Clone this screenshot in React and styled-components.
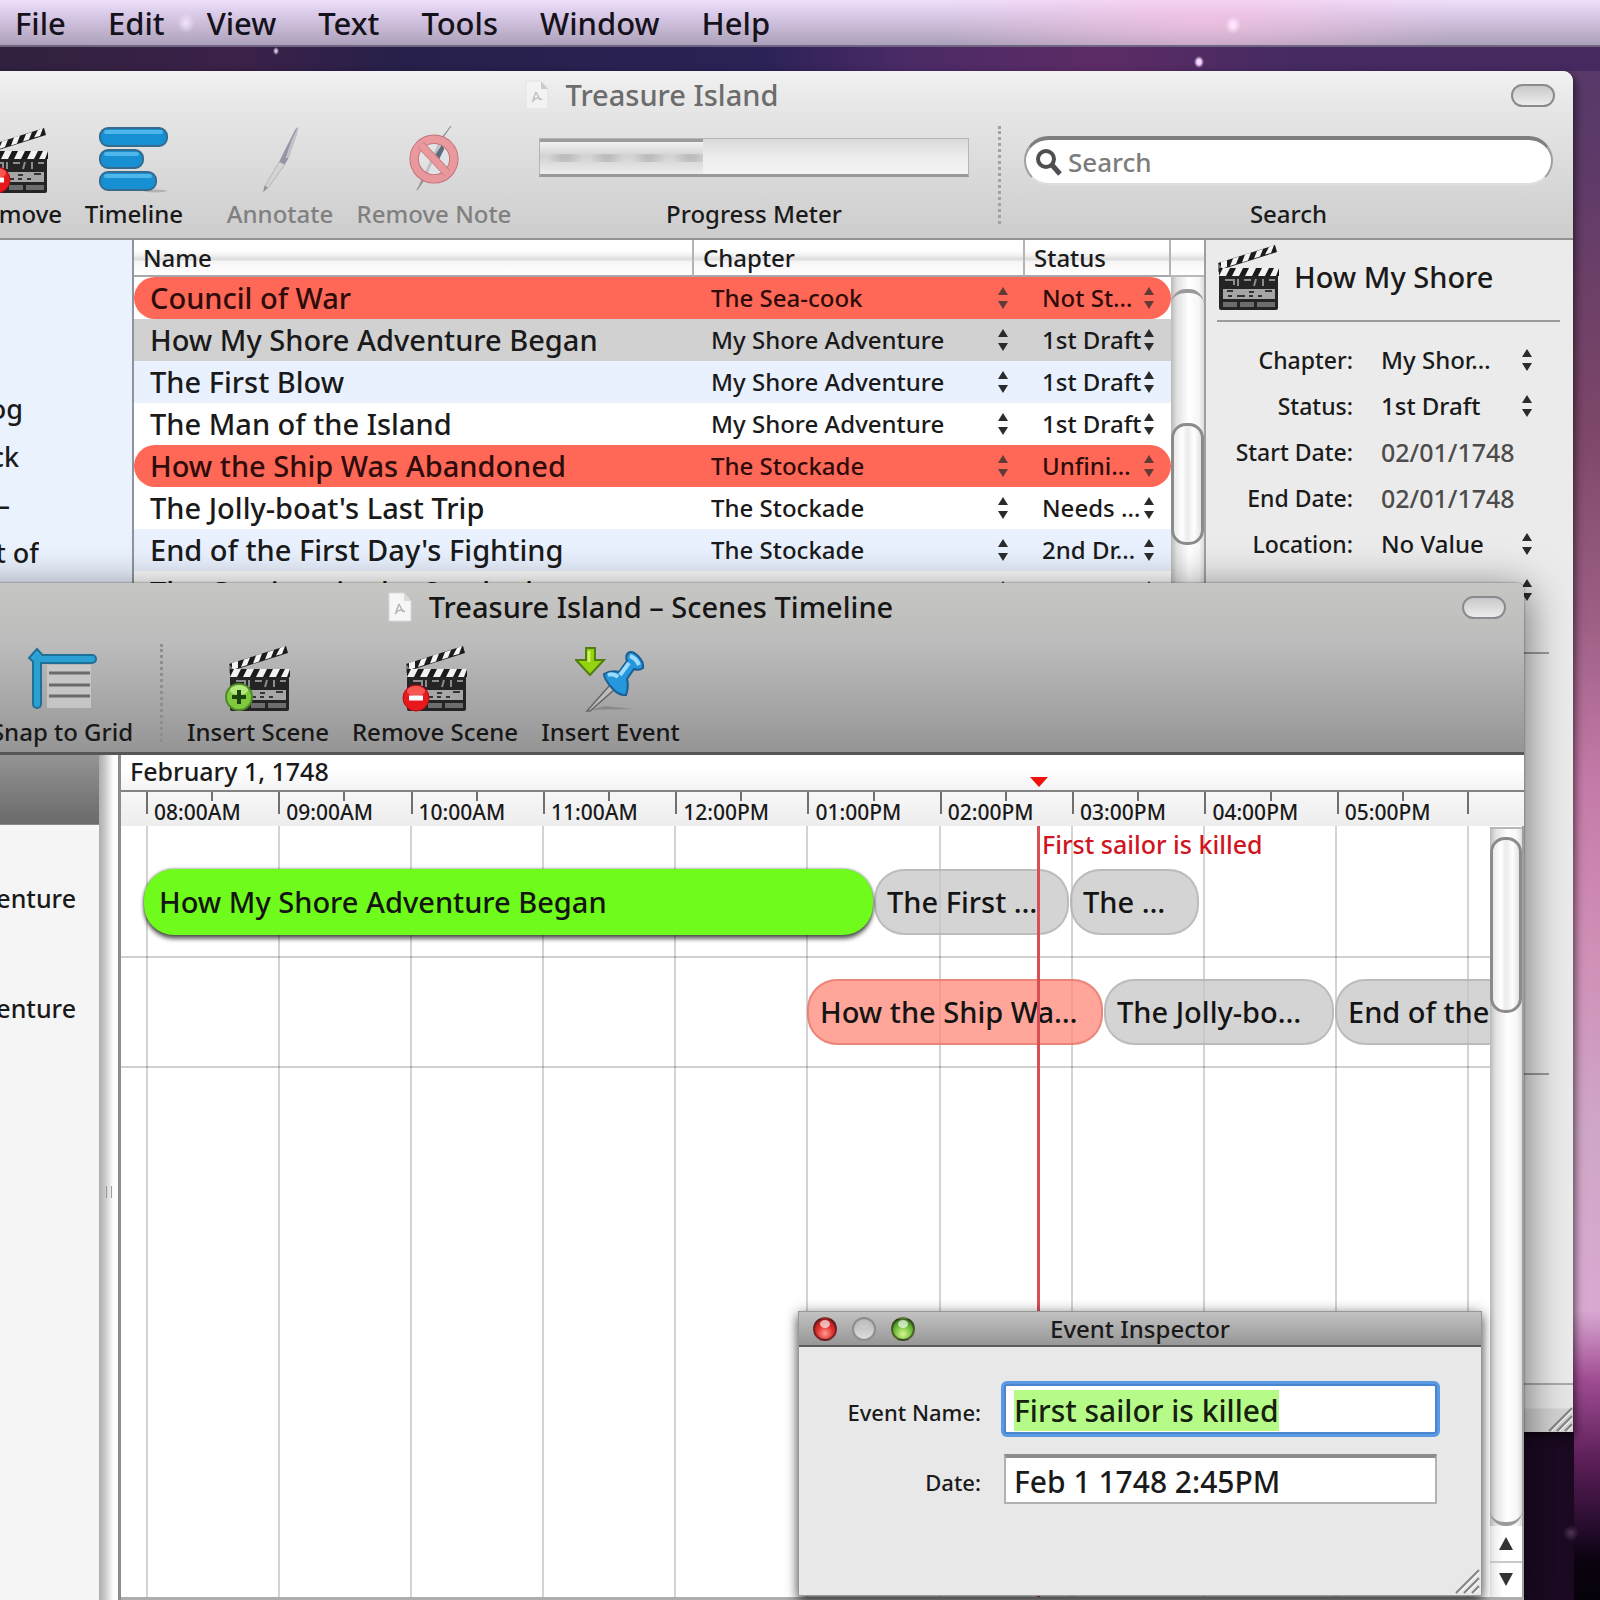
import React, { useEffect, useRef } from "react";
import styled, { createGlobalStyle, css } from "styled-components";

const FONT = '"Noto Sans", "Open Sans", sans-serif';

const GlobalStyle = createGlobalStyle`
  *, *::before, *::after { box-sizing: border-box; }
  body { margin: 0; font-family: ${FONT}; font-weight: 500; color: #1a1a1a; }
  button, input, select { font: inherit; color: inherit; margin: 0; }
  button, select { border: 0; padding: 0; background: none; appearance: none; }
`;

/* ---------- Desktop ---------- */

const Desktop = styled.main`
  position: relative;
  height: 100vh;
  min-height: 900px;
  overflow: hidden;
  background:
    radial-gradient(ellipse 5px 6px at 1199px 62px, #f3dcff 40%, transparent 100%),
    radial-gradient(ellipse 3px 4px at 276px 51px, #cfc3e0 30%, transparent 100%),
    radial-gradient(circle 8px at 1571px 1533px, #4a3350 10%, transparent 100%),
    linear-gradient(#1b0a22, #1b0a22) 1524px 1432px / 50px 200px no-repeat,
    linear-gradient(90deg, #30213f 0, #3b2148 240px, #27204a 400px, #2b2256 760px, #4a2a66 900px, #5d2c66 1100px, #452a62 1300px, #46295e 1600px) 0 0 / 100% 71px no-repeat,
    linear-gradient(#55386a 0, #5d3a68 160px, #7c4668 420px, #9d5f85 620px, #c47aa8 780px, #d08fb6 950px, #cfa6c6 1130px, #d9a9d2 1310px, #a04c92 1380px, #5c1f58 1460px, #240b2c 1530px, #0b030f 1560px, #06020a 1600px);
`;

const MenuBar = styled.nav`
  display: flex;
  align-items: center;
  gap: 42px;
  height: 47px;
  padding: 0 15px;
  background:
    radial-gradient(ellipse 8px 9px at 1233px 25px, #ffe6ff 20%, transparent 100%),
    radial-gradient(ellipse 9px 10px at 186px 23px, rgba(245, 232, 255, 0.8) 10%, transparent 100%),
    radial-gradient(ellipse 260px 60px at 1200px 20px, rgba(255, 190, 225, 0.6), transparent 100%),
    linear-gradient(#efdffb 0, #dccdec 12px, #c3b5d0 30px, #aba0bb 45px);
  border-bottom: 2px solid #6f6580;
`;

const MenuItem = styled.button`
  font-size: 31px;
  line-height: 44px;
  color: #15121c;
`;

/* ---------- Window chrome ---------- */

const Window = styled.section`
  position: absolute;
  display: flex;
  flex-direction: column;
`;

const MainWindow = styled(Window)`
  left: -271px;
  right: 27px;
  top: 71px;
  bottom: 168px;
  border-radius: 10px 10px 0 0;
  overflow: hidden;
  background: #ebebeb;
  box-shadow: 2px 4px 10px rgba(0, 0, 0, 0.6);
`;

const TimelineWindow = styled(Window)`
  left: -244px;
  right: 76px;
  top: 583px;
  bottom: 0;
  border-radius: 8px 8px 0 0;
  background: #fff;
  box-shadow: 4px 6px 40px rgba(0, 0, 0, 0.5), 0 0 2px rgba(0, 0, 0, 0.6);
`;

const Chrome = styled.header`
  display: flex;
  flex-direction: column;
  height: ${(p) => (p.$active ? 172 : 169)}px;
  flex-shrink: 0;
  border-radius: 8px 8px 0 0;
  ${(p) =>
    p.$active
      ? css`
          background: linear-gradient(#c6c6c3 0, #bcbcbc 60px, #959595 100%);
          border-bottom: 3px solid #565656;
        `
      : css`
          background: linear-gradient(#f2f2f2 0, #e8e8e8 30px, #cdcdcd 100%);
          border-bottom: 2px solid #929292;
        `}
`;

const TitleBar = styled.div`
  display: grid;
  grid-template-columns: 1fr auto 1fr;
  align-items: center;
  height: 48px;
  padding: 0 18px;
`;

const Title = styled.h1`
  grid-column: 2;
  display: flex;
  align-items: center;
  gap: 16px;
  margin: 0;
  font-size: 29px;
  line-height: 40px;
  font-weight: 500;
  color: ${(p) => (p.$active ? "#161616" : "#6c6c6c")};
`;

const Toggle = styled.button`
  justify-self: end;
  width: 44px;
  height: 23px;
  border: 2px solid #8b8b8f;
  border-radius: 12px;
  background: linear-gradient(#c9c9c9, #ececec);
`;

const Toolbar = styled.div`
  display: flex;
  align-items: flex-start;
  gap: ${(p) => p.$gap}px;
  flex: 1;
  padding: ${(p) => p.$pad};
  justify-content: ${(p) => p.$justify || "flex-start"};
`;

const Tool = styled.button`
  display: flex;
  flex-direction: column;
  align-items: center;
  gap: 4px;
  flex: none;
  width: ${(p) => p.$w}px;
  margin-right: ${(p) => p.$after || 0}px;
  font-size: 24px;
  line-height: 32px;
  white-space: nowrap;
  color: #181818;
  &:disabled { color: #808080; }
  &:disabled svg { opacity: 0.75; }
`;

const Separator = styled.div`
  align-self: flex-start;
  height: 98px;
  border-left: 3px dotted ${(p) => (p.$dark ? "#8e8e8e" : "#a2a2a2")};
`;

const Field = styled.label`
  display: flex;
  flex-direction: column;
  align-items: center;
  flex: 0 1 ${(p) => p.$w}px;
  margin-right: ${(p) => p.$after || 0}px;
  font-size: 24px;
  line-height: 32px;
  gap: ${(p) => p.$gap}px;
  padding-top: ${(p) => p.$top}px;
`;

const Progress = styled.div`
  width: 100%;
  height: 39px;
  border: 1px solid #b5b5b5;
  border-bottom: 3px solid #999;
  background: linear-gradient(#dadada, #ececec 50%, #f4f4f4);
`;

const ProgressFill = styled.div`
  height: 100%;
  border-top: 3px solid #9c9c9c;
  background:
    repeating-linear-gradient(90deg, transparent 0 8px, rgba(120, 120, 120, 0.25) 22px 28px, transparent 42px) 0 12px / 100% 8px no-repeat,
    linear-gradient(#f2f2f2, #d2d2d2 45%, #ededed);
`;

const SearchBox = styled.span`
  display: flex;
  align-items: center;
  gap: 5px;
  width: 100%;
  height: 49px;
  padding: 0 9px;
  border-radius: 25px;
  background: #fff;
  border: 2px solid #a0a0a0;
  border-top: 4px solid #7e7e7e;
  border-bottom-color: #dedede;
`;

const SearchInput = styled.input.attrs({ type: "search", placeholder: "Search" })`
  flex: 1;
  min-width: 0;
  padding: 0;
  border: 0;
  outline: 0;
  background: none;
  font-size: 26px;
  line-height: 34px;
  &::placeholder { color: #7c7c7c; opacity: 1; }
`;

/* ---------- Main window body ---------- */

const Body = styled.div`
  display: flex;
  flex: 1;
  min-height: 0;
`;

const Sidebar = styled.aside`
  flex: none;
  width: 405px;
  padding: 147px 0 0 271px;
  background: #eaf2fe;
  border-right: 2px solid #8f949c;
`;

const SideItem = styled.div`
  display: flex;
  justify-content: flex-end;
  width: ${(p) => p.$end}px;
  height: 48px;
  overflow: hidden;
  font-size: 27px;
  line-height: 44px;
  white-space: nowrap;
`;

const TablePane = styled.div`
  display: flex;
  flex: 1;
  min-width: 0;
  background: #fff;
`;

const Table = styled.table`
  flex: 1;
  align-self: flex-start;
  table-layout: fixed;
  border-collapse: separate;
  border-spacing: 0;
`;

const HeadCell = styled.th`
  width: ${(p) => p.$w || "auto"};
  height: 37px;
  padding: 0 9px;
  text-align: left;
  font-weight: 500;
  font-size: 24px;
  line-height: 32px;
  border-bottom: 2px solid #a8a8a8;
  border-right: 2px solid #b4b4b4;
  background: linear-gradient(#fff 0 30%, #f0f0f0 45%, #dcdcdc 55%, #f6f6f6 62%, #fff);
`;

const rowTone = {
  red: "#ff6757",
  selected: "#d1d1d1",
  blue: "#e9f1fe",
  white: "#fff",
};

const Row = styled.tr`
  td { background: ${(p) => rowTone[p.$tone]}; }
  ${(p) =>
    p.$tone === "red" &&
    css`
      color: #2e0c0a;
      svg { opacity: 0.75; }
      td:first-child { border-radius: 21px 0 0 21px; }
      td:last-child { border-radius: 0 21px 21px 0; }
    `}
`;

const Cell = styled.td`
  height: 42px;
  padding: 0 0 0 ${(p) => (p.$name ? 16 : 17)}px;
  font-size: ${(p) => (p.$name ? 29 : 24)}px;
  line-height: 40px;
  white-space: nowrap;
`;

const PopupWrap = styled.span`
  position: relative;
  display: flex;
  align-items: center;
  select {
    flex: 1;
    min-width: 0;
    line-height: 34px;
    outline: 0;
  }
  svg {
    position: absolute;
    right: ${(p) => p.$inset}px;
    pointer-events: none;
  }
`;

const ScrollColumn = styled.div`
  display: flex;
  flex-direction: column;
  width: ${(p) => p.$w}px;
  flex: none;
  border-right: 2px solid #a0a0a0;
  background: linear-gradient(90deg, #b9b9b9 0, #e2e2e2 18%, #fff 55%, #f6f6f6 85%, #dcdcdc);
`;

const ScrollHead = styled.div`
  height: ${(p) => p.$h}px;
  flex: none;
  background: ${(p) =>
    p.$plain
      ? "#fff"
      : "linear-gradient(#fff 0 30%, #f0f0f0 45%, #dcdcdc 55%, #f6f6f6 62%, #fff)"};
  border-bottom: 2px solid #b8b8b8;
`;

const TroughCap = styled.div`
  height: 20px;
  margin-top: 12px;
  border-top: 4px solid #9a9a9a;
  border-radius: 15px 15px 0 0;
`;

const Thumb = styled.div`
  height: ${(p) => p.$h}px;
  margin-top: ${(p) => p.$top}px;
  flex: none;
  border: 3px solid #8b8b8b;
  border-radius: 15px;
  background: linear-gradient(90deg, #eaeaea, #fff 30%, #ebebeb 50%, #fff 75%, #e2e2e2);
`;

const Inspector = styled.aside`
  display: flex;
  flex-direction: column;
  flex: none;
  width: 367px;
  padding: 2px 0 0 11px;
  background: #ebebeb;
`;

const InspectorHead = styled.div`
  display: flex;
  align-items: center;
  gap: 13px;
  height: 80px;
  margin-right: 13px;
  border-bottom: 2px solid #9b9b9b;
  font-size: 29px;
  line-height: 40px;
  padding-bottom: 8px;
  svg { margin-left: -4px; }
`;

const Properties = styled.div`
  display: grid;
  grid-template-columns: 136px 1fr;
  grid-auto-rows: 46px;
  align-items: center;
  column-gap: 28px;
  padding: 15px 0 0;
  font-size: 24px;
  line-height: 32px;
  label { font-size: 23px; text-align: right; white-space: nowrap; }
`;

const DateInput = styled.input`
  width: 100%;
  padding: 0;
  border: 0;
  background: none;
  font-size: 25px;
  color: #4c4c4c;
`;

const Rule = styled.hr`
  width: 332px;
  margin: ${(p) => p.$top}px 0 0;
  border: 0;
  border-top: 2px solid #9b9b9b;
`;

const WindowFooter = styled.footer`
  display: flex;
  align-items: flex-end;
  justify-content: flex-end;
  height: 49px;
  margin: auto 0 0 -11px;
  border-top: 2px solid #a9a9a9;
  background: linear-gradient(#e6e6e6 0 48%, #d4d4d4 52%);
`;

/* ---------- Timeline window body ---------- */

const Lanes = styled.aside`
  flex: none;
  width: 343px;
  background: #f5f5f5;
`;

const LanesHead = styled.div`
  height: 70px;
  background: linear-gradient(#949494, #6a6a6a);
  border-bottom: 1px solid #8a8a8a;
`;

const LaneName = styled.div`
  height: ${(p) => p.$h}px;
  padding: ${(p) => p.$top}px 23px 0 0;
  text-align: right;
  font-size: 25px;
  line-height: 36px;
`;

const Splitter = styled.div`
  display: flex;
  flex: none;
  align-items: center;
  justify-content: center;
  width: 22px;
  padding-top: 28px;
  border-right: 3px solid #8c8c8c;
  background: linear-gradient(90deg, #adadad, #c8c8c8 30%, #fdfdfd 75%, #fff);
  &::before {
    content: "";
    width: 6px;
    height: 12px;
    border: solid #9a9a9a;
    border-width: 0 1px;
  }
`;

const Schedule = styled.div`
  position: relative;
  display: flex;
  flex-direction: column;
  flex: 1;
  min-width: 0;
`;

const DateStrip = styled.div`
  height: 37px;
  flex: none;
  padding: 0 9px;
  font-size: 25px;
  line-height: 33px;
  background: linear-gradient(#fff 40%, #f3f3f3);
  border-bottom: 2px solid #828282;
`;

const Ruler = styled.div`
  display: flex;
  flex: none;
  height: 34px;
  padding: 0 55px 0 25px;
  background: linear-gradient(#f7f7f7, #ededed);
`;

const Hour = styled.div`
  display: flex;
  flex: 1;
  min-width: 0;
  padding: 5px 0 0 8px;
  font-size: 21px;
  line-height: 30px;
  background:
    linear-gradient(#6f6f6f, #6f6f6f) 0 0 / 2px 22px no-repeat,
    linear-gradient(#6f6f6f, #6f6f6f) 50% 0 / 2px 9px no-repeat;
  &:last-child {
    background:
      linear-gradient(#6f6f6f, #6f6f6f) 0 0 / 2px 22px no-repeat,
      linear-gradient(#6f6f6f, #6f6f6f) 50% 0 / 2px 9px no-repeat,
      linear-gradient(#6f6f6f, #6f6f6f) 100% 0 / 2px 22px no-repeat;
  }
`;

const Canvas = styled.div`
  display: flex;
  flex: 1;
  min-height: 0;
  border-bottom: 3px solid #adadad;
`;

const Tracks = styled.div`
  position: relative;
  flex: 1;
  min-width: 0;
  overflow: hidden;
  background: #fff;
`;

const GridLines = styled.div`
  position: absolute;
  inset: 0 21px 0 25px;
  display: flex;
  border-right: 2px solid rgba(0, 0, 0, 0.17);
  pointer-events: none;
  span { flex: 1; border-left: 2px solid rgba(0, 0, 0, 0.17); }
`;

const Track = styled.div`
  display: flex;
  gap: 1px;
  height: ${(p) => p.$h}px;
  padding: ${(p) => p.$top}px 0 0 ${(p) => p.$start}px;
  border-bottom: 2px solid #d0d0d0;
`;

const barTone = {
  green: css`
    background: #6ffb1b;
    box-shadow: 0 4px 4px rgba(0, 0, 0, 0.6), 0 0 3px rgba(60, 60, 60, 0.7);
    z-index: 1;
  `,
  gray: css`
    background: rgba(195, 195, 195, 0.72);
    border: 2px solid rgba(165, 165, 165, 0.5);
  `,
  red: css`
    background: rgba(255, 130, 113, 0.72);
    border: 2px solid rgba(215, 100, 90, 0.5);
  `,
};

const Bar = styled.button`
  position: relative;
  flex: none;
  width: ${(p) => p.$w}px;
  height: 66px;
  padding: 0 ${(p) => (p.$tone === "green" ? 15 : 11)}px;
  border-radius: 30px;
  overflow: hidden;
  text-align: left;
  white-space: nowrap;
  font-size: 29px;
  line-height: 40px;
  color: #141414;
  ${(p) => barTone[p.$tone]}
`;

const EventPin = styled.div`
  position: absolute;
  left: 916px;
  top: 0;
  bottom: 0;
  z-index: 2;
  padding-left: 2px;
  border-left: 3px solid #d94f58;
  font-size: 25px;
  line-height: 37px;
  color: #d01420;
  white-space: nowrap;
`;

const PinHead = styled.svg`
  position: absolute;
  left: 908px;
  top: 21px;
`;

const Arrows = styled.div`
  display: flex;
  flex-direction: column;
  height: 71px;
  margin-top: auto;
  background: linear-gradient(90deg, #e8e8e8, #fff 40%);
`;

const ArrowButton = styled.button`
  display: flex;
  flex: 1;
  align-items: center;
  justify-content: center;
  & + & { border-top: 2px solid #c9c9c9; }
`;

const TroughEnd = styled.div`
  flex: 1;
  border-bottom: 4px solid #9a9a9a;
  border-radius: 0 0 15px 15px;
`;

/* ---------- Event inspector ---------- */

const Panel = styled(Window)`
  right: 118px;
  bottom: 4px;
  width: 684px;
  height: 285px;
  z-index: 3;
  background: #e8e8e8;
  border: 1px solid #979797;
  box-shadow: 0 6px 10px rgba(0, 0, 0, 0.55), 0 0 12px rgba(0, 0, 0, 0.3);
`;

const PanelBar = styled.header`
  display: grid;
  grid-template-columns: 1fr auto 1fr;
  align-items: center;
  height: 35px;
  padding: 0 14px;
  background: linear-gradient(#c2c2c2, #979797);
  border-bottom: 2px solid #5c5c5c;
`;

const Lights = styled.div`
  display: flex;
  gap: 15px;
`;

const lightTone = {
  red: "radial-gradient(circle at 50% 72%, #ff9a8e 0, #e2322f 45%, #8c0d14 100%)",
  off: "linear-gradient(#b4b4b4, #dedede)",
  green: "radial-gradient(circle at 50% 75%, #d6f98e 0, #6fbb3a 50%, #1f5a14 100%)",
};

const Light = styled.button`
  position: relative;
  width: 24px;
  height: 24px;
  border-radius: 50%;
  border: 2px solid ${(p) => (p.$tone === "off" ? "#8d8d8d" : "rgba(50, 30, 30, 0.55)")};
  background: ${(p) => lightTone[p.$tone]};
  &::after {
    content: "";
    position: absolute;
    inset: 1px 5px 11px;
    border-radius: 50%;
    background: rgba(255, 255, 255, ${(p) => (p.$tone === "off" ? 0.1 : 0.65)});
  }
`;

const PanelTitle = styled.h2`
  margin: 0;
  font-size: 24px;
  line-height: 32px;
  font-weight: 500;
`;

const Form = styled.form`
  display: grid;
  grid-template-columns: 182px 1fr;
  grid-template-rows: 50px 50px;
  align-items: center;
  gap: 20px 23px;
  padding: 37px 44px 0 0;
  font-size: 22px;
  line-height: 32px;
  label { padding-top: 6px; text-align: right; }
`;

const TextInput = styled.input`
  width: 100%;
  height: 50px;
  padding: 2px 8px 0;
  border: 2px solid #b2b2b2;
  border-top: 4px solid #8c8c8c;
  background: #fff;
  outline: 0;
  font-size: 30px;
  line-height: 38px;
  &:focus {
    border: 2px solid #4a86cf;
    border-radius: 3px;
    box-shadow: 0 0 0 3px #5b99e3;
  }
  &::selection { background: #b6fb87; color: #16210f; }
`;

const Grip = styled.svg`
  display: block;
  margin: ${(p) => p.$margin || "0"};
`;

/* ---------- Drawings ---------- */

const Stepper = () => (
  <svg width="12" height="22" viewBox="0 0 12 22" aria-hidden="true">
    <path d="M6 0L11 8H1Z M6 22L1 14H11Z" fill="#2b2b2b" />
  </svg>
);

const DocIcon = ({ faded }) => (
  <svg width="26" height="30" viewBox="0 0 26 30" opacity={faded ? 0.75 : 1} aria-hidden="true">
    <path d="M2 1H17L24 9V29H2Z" fill="#f6f6f6" stroke={faded ? "#e2e2e2" : "#d8d8d8"} />
    <path d="M17 1V9H24Z" fill={faded ? "#c0c0c0" : "#dadada"} />
    <path d="M12 12L16 20M12 12L9 20M8 22C12 17 15 17 18 20" stroke="#b5b5b5" strokeWidth="1.5" fill="none" />
  </svg>
);

const Clapper = ({ badge }) => (
  <svg width="68" height="68" viewBox="0 0 68 68" aria-hidden="true">
    <path d="M5 20L62 2L64 9L7 27Z" fill="#1c1c1c" />
    <path d="M8 19l6-2 0 7-6 2ZM20 15.500l6-2-3 7.500-6 2ZM32 11.500l6-2-3 8-6 2ZM44 8l6-2-3 7.500-6 2ZM56 4l5-2-3 8-6 1.500Z" fill="#f4f4f4" />
    <rect x="6" y="27" width="59" height="40" rx="2" fill="#242424" />
    <path d="M5 20L12 29H5Z" fill="#7c7c7c" />
    <path d="M6 25H66V33H6Z" fill="#1a1a1a" />
    <path d="M10 25h7l-4 8H6ZM23 25h7l-4 8h-7ZM36 25h7l-4 8h-7ZM49 25h7l-4 8h-7ZM61 25h5l-3 8h-6Z" fill="#f2f2f2" />
    <path d="M12 37h9v5M25 36v7M31 37h7M43 36l-2 7M50 36v7M56 37h6" stroke="#8d8d8d" strokeWidth="2" fill="none" />
    <path d="M10 46H62V56H10Z" fill="#a6a6a6" />
    <path d="M14 48h6M24 53h8M36 49h5M45 53h4M52 48h7M15 53h4M36 53h4" stroke="#333" strokeWidth="2" />
    <path d="M10 59h14v5H10ZM27 59h14v5H27ZM44 59h18v5H44Z" fill="#6d6d6d" />
    {badge === "plus" && (
      <g>
        <circle cx="15" cy="53" r="13" fill="#7fc93f" stroke="#4e8a26" strokeWidth="2" />
        <ellipse cx="15" cy="46" rx="9" ry="5" fill="#c4f08e" opacity="0.75" />
        <path d="M15 46V60M8 53H22" stroke="#1c4210" strokeWidth="4" />
      </g>
    )}
    {badge === "minus" && (
      <g>
        <circle cx="15" cy="54" r="13" fill="#e8191c" stroke="#b00f12" strokeWidth="1" />
        <ellipse cx="15" cy="47" rx="9" ry="5" fill="#ff8078" opacity="0.6" />
        <path d="M8 54H22" stroke="#fff" strokeWidth="5" />
      </g>
    )}
  </svg>
);

const BarsIcon = () => (
  <svg width="70" height="68" viewBox="0 0 70 68" aria-hidden="true">
    <ellipse cx="56" cy="65" rx="12" ry="1.500" fill="#b3b3b3" />
    {[[2, 67], [24, 43], [46, 56]].map(([y, w]) => (
      <g key={y}>
        <rect x="1" y={y} width={w} height="18" rx="8" fill="#1690d2" stroke="#356c8e" strokeWidth="2" />
        <rect x="5" y={y + 2} width={w - 8} height="4" rx="2" fill="#4fb6ea" />
      </g>
    ))}
  </svg>
);

const PenIcon = () => (
  <svg width="44" height="68" viewBox="0 0 44 72" aria-hidden="true">
    <path d="M41 1L38 4L25 30L21 38L27 41L31 34L40 8Z" fill="#7d7d93" />
    <path d="M41 1L34 16L28 34L31 34L40 8Z" fill="#b9b9c6" />
    <path d="M21 38L27 41L9 66L5 69L6 64Z" fill="#d2d2d2" stroke="#a8a8a8" />
    <path d="M4 70L9 65L6 63Z" fill="#777" />
  </svg>
);

const NoPenIcon = () => (
  <svg width="54" height="68" viewBox="0 0 54 72" aria-hidden="true">
    <path d="M45 0L38 10L16 58L9 68L12 62L34 14Z" fill="#8a8a8a" stroke="#777" />
    <circle cx="27" cy="35" r="21" fill="rgba(235,240,245,0.5)" stroke="#b84f58" strokeWidth="10" />
    <path d="M35 20L25 36L31 38L38 24Z" fill="#33475c" />
    <circle cx="27" cy="35" r="21" fill="none" stroke="#ee8288" strokeWidth="8" />
    <path d="M13 20L41 50" stroke="#c4626a" strokeWidth="9" />
    <path d="M13 20L41 50" stroke="#ee8288" strokeWidth="7" />
  </svg>
);

const SnapIcon = () => (
  <svg width="70" height="68" viewBox="0 0 70 68" aria-hidden="true">
    <path d="M20 21H64V64H20Z" fill="#cfcfcf" opacity="0.75" />
    <path d="M22 29H63M22 41H63M22 52H63" stroke="#6a6a6a" strokeWidth="3" />
    <path d="M9 15H65" stroke="#1f6f96" strokeWidth="10" strokeLinecap="round" />
    <path d="M10 12V60" stroke="#1f6f96" strokeWidth="10" strokeLinecap="round" />
    <path d="M10 5L18 14L10 21L2 14Z" fill="#2fa8da" stroke="#1f6f96" strokeWidth="2" />
    <path d="M10 15H65M10 13V60" stroke="#2c9fd3" strokeWidth="6" strokeLinecap="round" />
  </svg>
);

const PinIcon = () => (
  <svg width="72" height="68" viewBox="0 0 72 68" aria-hidden="true">
    <path d="M14 66L58 65L30 62Z" fill="#777" opacity="0.6" />
    <path d="M35 41L40 45L15 67L12 67Z" fill="#bdbdbd" stroke="#666" strokeWidth="1.500" />
    <path d="M53 9Q57 6 63 12Q69 18 68 24Q64 27 59 25L52 35Q54 43 51 51Q44 52 37 44Q29 35 29 30Q36 26 44 28L52 17Q50 12 53 9Z" fill="#2597dc" stroke="#1a5f93" strokeWidth="2" />
    <path d="M55 12Q61 14 64 21M45 31L54 19M33 31Q38 29 43 33" stroke="#9bdcff" strokeWidth="4" fill="none" />
    <path d="M11 4H20V16H29L15 31L1 16H11Z" fill="#94d40f" stroke="#527d12" strokeWidth="2" />
    <path d="M14 7V18" stroke="#cdf25c" strokeWidth="3" />
  </svg>
);

const Magnifier = () => (
  <svg width="28" height="30" viewBox="0 0 28 30" aria-hidden="true">
    <circle cx="11" cy="12" r="8" fill="none" stroke="#4f4f4f" strokeWidth="4" />
    <path d="M17 18L25 27" stroke="#4f4f4f" strokeWidth="5" />
  </svg>
);

const ResizeGrip = ({ margin }) => (
  <Grip $margin={margin} width="26" height="26" viewBox="0 0 26 26" aria-hidden="true">
    <path d="M2 25L25 2M10 25L25 10M18 25L25 18" stroke="#858585" strokeWidth="2" />
    <path d="M5 25L25 5M13 25L25 13M21 25L25 21" stroke="#fafafa" strokeWidth="1" />
  </Grip>
);

/* ---------- Data ---------- */

const menus = ["File", "Edit", "View", "Text", "Tools", "Window", "Help"];

const scenes = [
  ["Council of War", "The Sea-cook", "Not St…", "red"],
  ["How My Shore Adventure Began", "My Shore Adventure", "1st Draft", "selected"],
  ["The First Blow", "My Shore Adventure", "1st Draft", "blue"],
  ["The Man of the Island", "My Shore Adventure", "1st Draft", "white"],
  ["How the Ship Was Abandoned", "The Stockade", "Unfini…", "red"],
  ["The Jolly-boat's Last Trip", "The Stockade", "Needs …", "white"],
  ["End of the First Day's Fighting", "The Stockade", "2nd Dr…", "blue"],
  ["The Garrison in the Stockade", "The Stockade", "1st Draft", "white"],
];

const hours = ["08:00AM", "09:00AM", "10:00AM", "11:00AM", "12:00PM", "01:00PM", "02:00PM", "03:00PM", "04:00PM", "05:00PM"];

const Popup = ({ value, label, id, inset = 16 }) => (
  <PopupWrap $inset={inset}>
    <select id={id} aria-label={label} defaultValue={value}>
      <option>{value}</option>
    </select>
    <Stepper />
  </PopupWrap>
);

/* ---------- Screens ---------- */

function ManuscriptWindow() {
  return (
    <MainWindow aria-label="Treasure Island">
      <Chrome>
        <TitleBar>
          <Title><DocIcon faded />Treasure Island</Title>
          <Toggle aria-label="Toggle toolbar" />
        </TitleBar>
        <Toolbar $gap={23} $justify="flex-end" $pad="7px 20px 0 0">
          <Tool $w={90}><Clapper badge="minus" />Remove</Tool>
          <Tool $w={100} $after={20}><BarsIcon />Timeline</Tool>
          <Tool $w={106} disabled><PenIcon />Annotate</Tool>
          <Tool $w={156} $after={4} disabled><NoPenIcon />Remove Note</Tool>
          <Field as="div" $w={430} $top={12} $gap={21} $after={6}>
            <Progress role="progressbar" aria-label="Progress Meter" aria-valuenow={38}>
              <ProgressFill style={{ width: "38%" }} />
            </Progress>
            Progress Meter
          </Field>
          <Separator />
          <Field $w={529} $top={10} $gap={13}>
            <SearchBox><Magnifier /><SearchInput /></SearchBox>
            Search
          </Field>
        </Toolbar>
      </Chrome>
      <Body>
        <Sidebar>
          <SideItem $end={23}>og</SideItem>
          <SideItem $end={19}>ck</SideItem>
          <SideItem $end={10}>–</SideItem>
          <SideItem $end={39}>t of</SideItem>
        </Sidebar>
        <TablePane>
          <Table>
            <thead>
              <tr>
                <HeadCell>Name</HeadCell>
                <HeadCell $w="331px">Chapter</HeadCell>
                <HeadCell $w="146px">Status</HeadCell>
              </tr>
            </thead>
            <tbody>
              {scenes.map(([name, chapter, status, tone]) => (
                <Row key={name} $tone={tone}>
                  <Cell $name>{name}</Cell>
                  <Cell><Popup value={chapter} label={`Chapter of ${name}`} /></Cell>
                  <Cell><Popup value={status} label={`Status of ${name}`} /></Cell>
                </Row>
              ))}
            </tbody>
          </Table>
          <ScrollColumn $w={35}>
            <ScrollHead $h={37} />
            <TroughCap />
            <Thumb $h={122} $top={114} />
          </ScrollColumn>
        </TablePane>
        <Inspector>
          <InspectorHead><Clapper />How My Shore</InspectorHead>
          <Properties>
            <label htmlFor="chapter">Chapter:</label>
            <Popup id="chapter" value="My Shor…" inset={40} />
            <label htmlFor="status">Status:</label>
            <Popup id="status" value="1st Draft" inset={40} />
            <label htmlFor="start">Start Date:</label>
            <DateInput id="start" defaultValue="02/01/1748" />
            <label htmlFor="end">End Date:</label>
            <DateInput id="end" defaultValue="02/01/1748" />
            <label htmlFor="location">Location:</label>
            <Popup id="location" value="No Value" inset={40} />
            <span />
            <Popup label="Other" value="" inset={40} />
          </Properties>
          <Rule $top={39} />
          <Rule $top={419} />
          <WindowFooter><ResizeGrip /></WindowFooter>
        </Inspector>
      </Body>
    </MainWindow>
  );
}

function EventInspector() {
  const nameRef = useRef(null);
  useEffect(() => {
    nameRef.current.focus();
    nameRef.current.select();
  }, []);
  return (
    <Panel as="aside" aria-label="Event Inspector">
      <PanelBar>
        <Lights>
          <Light $tone="red" aria-label="Close" />
          <Light $tone="off" aria-label="Minimize" />
          <Light $tone="green" aria-label="Zoom" />
        </Lights>
        <PanelTitle>Event Inspector</PanelTitle>
      </PanelBar>
      <Form>
        <label htmlFor="event-name">Event Name:</label>
        <TextInput id="event-name" ref={nameRef} defaultValue="First sailor is killed" />
        <label htmlFor="event-date">Date:</label>
        <TextInput id="event-date" defaultValue="Feb 1 1748 2:45PM" />
      </Form>
      <ResizeGrip margin="auto 1px 1px auto" />
    </Panel>
  );
}

function ScenesTimeline() {
  return (
    <TimelineWindow aria-label="Scenes Timeline">
      <Chrome $active>
        <TitleBar>
          <Title $active as="h2"><DocIcon />Treasure Island – Scenes Timeline</Title>
          <Toggle aria-label="Toggle toolbar" />
        </TitleBar>
        <Toolbar $gap={25} $pad="13px 0 0 236px">
          <Tool $w={140} $after={3}><SnapIcon />Snap to Grid</Tool>
          <Separator $dark />
          <Tool $w={140}><Clapper badge="plus" />Insert Scene</Tool>
          <Tool $w={164}><Clapper badge="minus" />Remove Scene</Tool>
          <Tool $w={137}><PinIcon />Insert Event</Tool>
        </Toolbar>
      </Chrome>
      <Body>
        <Lanes>
          <LanesHead />
          <LaneName $h={132} $top={55}>My Shore Adventure</LaneName>
          <LaneName $h={110} $top={33}>My Sea Adventure</LaneName>
        </Lanes>
        <Splitter />
        <Schedule>
          <DateStrip>February 1, 1748</DateStrip>
          <Ruler>{hours.map((h) => <Hour key={h}>{h}</Hour>)}</Ruler>
          <PinHead width="20" height="12" viewBox="0 0 20 12" aria-hidden="true">
            <path d="M1 1H19L10 11Z" fill="#f0100c" />
          </PinHead>
          <Canvas>
            <Tracks>
              <GridLines>{hours.map((h) => <span key={h} />)}</GridLines>
              <Track $h={132} $top={43} $start={23}>
                <Bar $w={729} $tone="green">How My Shore Adventure Began</Bar>
                <Bar $w={195} $tone="gray">The First …</Bar>
                <Bar $w={129} $tone="gray">The …</Bar>
              </Track>
              <Track $h={110} $top={21} $start={686}>
                <Bar $w={296} $tone="red">How the Ship Wa…</Bar>
                <Bar $w={230} $tone="gray">The Jolly-bo…</Bar>
                <Bar $w={230} $tone="gray">End of the First</Bar>
              </Track>
              <EventPin>First sailor is killed</EventPin>
            </Tracks>
            <ScrollColumn $w={34}>
              <ScrollHead $h={3} $plain />
              <Thumb $h={176} $top={8} />
              <TroughEnd />
              <Arrows>
                <ArrowButton aria-label="Scroll up">
                  <svg width="14" height="13" viewBox="0 0 14 13"><path d="M7 0L14 13H0Z" fill="#333" /></svg>
                </ArrowButton>
                <ArrowButton aria-label="Scroll down">
                  <svg width="14" height="13" viewBox="0 0 14 13"><path d="M7 13L0 0H14Z" fill="#333" /></svg>
                </ArrowButton>
              </Arrows>
            </ScrollColumn>
          </Canvas>
        </Schedule>
      </Body>
    </TimelineWindow>
  );
}

export default function App() {
  return (
    <>
      <GlobalStyle />
      <Desktop>
        <MenuBar>{menus.map((m) => <MenuItem key={m}>{m}</MenuItem>)}</MenuBar>
        <ManuscriptWindow />
        <ScenesTimeline />
        <EventInspector />
      </Desktop>
    </>
  );
}
